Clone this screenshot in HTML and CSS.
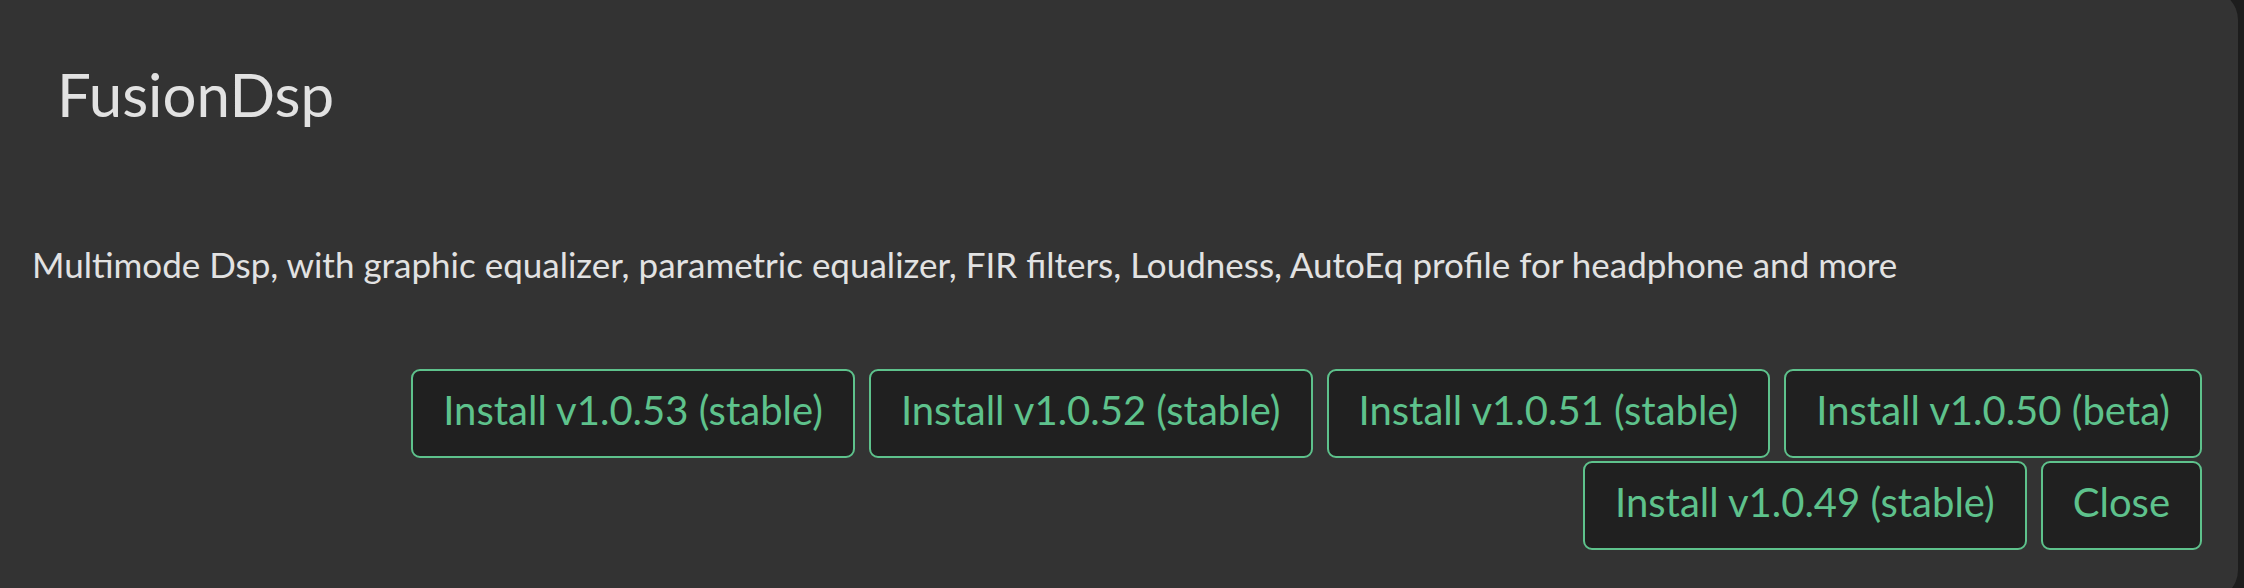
FILE: index.html
```html
<!DOCTYPE html>
<html lang="en">
<head>
    <meta charset="UTF-8">
    <meta name="viewport" content="width=device-width, initial-scale=1.0">
    <title>FusionDsp</title>
    <link rel="stylesheet" href="styles.css">
</head>
<body>
    <div class="dialog">
        <h1 class="dialog-title">FusionDsp</h1>
        <p class="dialog-desc">Multimode Dsp, with graphic equalizer, parametric equalizer, FIR filters, Loudness, AutoEq profile for headphone and more</p>

        <!-- versions -->
        <div class="actions">
            <button class="btn">Install v1.0.53 (stable)</button>
            <button class="btn">Install v1.0.52 (stable)</button>
            <button class="btn">Install v1.0.51 (stable)</button>
            <button class="btn">Install v1.0.50 (beta)</button>
            <button class="btn">Install v1.0.49 (stable)</button>
            <button class="btn">Close</button>
        </div>
    </div>
</body>
</html>
```

FILE: styles.css
```css
body {
    margin: 0;
    height: 588px;
    overflow: hidden;
    background-color: #1d1d1d;
    font-family: Lato, "Open Sans", sans-serif;
}
.dialog {
    margin: -10px 6px 0 -10px;
    height: 610px;
    box-sizing: border-box;
    padding: 68px 36px 0 42px;
    background-color: #333333;
    border-radius: 30px;
}
.dialog-title {
    margin: 0 0 0 25px;
    font-size: 60px;
    font-weight: normal;
    line-height: 72px;
    color: #e2e2e2;
}
.dialog-desc {
    margin: 115px 0 0 0;
    font-size: 35px;
    line-height: 38px;
    color: #e2e2e2;
}
.actions {
    margin-top: 86px;
    display: flex;
    flex-wrap: wrap;
    justify-content: flex-end;
    gap: 3px 14px;
}
.btn {
    font-family: Lato, "Open Sans", sans-serif;
    font-size: 40px;
    line-height: 50px;
    height: 89px;
    padding: 14px 30px 21px 30px;
    background-color: #202020;
    color: #5ec28c;
    border: 2px solid #5ec28c;
    border-radius: 9px;
    cursor: pointer;
}
```
